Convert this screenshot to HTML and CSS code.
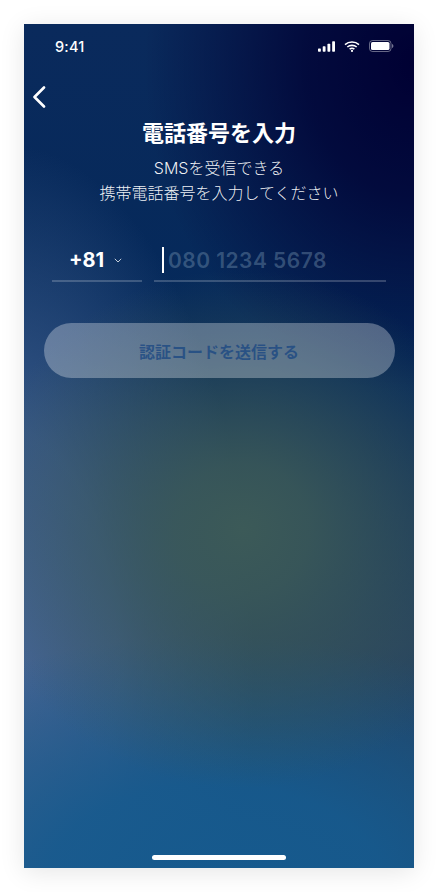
FILE: index.html
```html
<!DOCTYPE html>
<html lang="ja">
<head>
<meta charset="utf-8">
<title>電話番号を入力</title>
<link rel="stylesheet" href="styles.css">
</head>
<body>
<main class="screen">
  <div class="status">
    <span class="time">9:41</span>
    <div class="status-icons">
      <svg class="sig" width="17" height="11" viewBox="0 0 18 11"><rect x="0" y="7.500" width="3" height="3.500" rx=".7"/><rect x="5" y="5.200" width="3" height="5.800" rx=".7"/><rect x="10" y="2.600" width="3" height="8.400" rx=".7"/><rect x="15" y="0" width="3" height="11" rx=".7"/></svg>
      <svg class="wifi" width="16" height="11" viewBox="0 0 16 11"><path d="M1 3.600C4.900.2 11.100.2 15 3.600M3.300 6C5.900 3.800 10.100 3.800 12.700 6M5.600 8.200C7 7.100 9 7.100 10.400 8.200" fill="none" stroke="#fff" stroke-width="1.600"/><circle cx="8" cy="9.900" r="1.100" fill="#fff"/></svg>
      <svg class="batt" width="25" height="12" viewBox="0 0 25 12"><rect x=".5" y=".5" width="21.500" height="11" rx="3" fill="none" stroke="#fff" stroke-opacity=".4"/><rect x="2" y="2" width="18.500" height="8" rx="1.600" fill="#fff"/><path d="M23 4v4c.8-.3 1.400-1.100 1.400-2s-.6-1.700-1.400-2z" fill="#fff" fill-opacity=".45"/></svg>
    </div>
  </div>
  <button class="back" aria-label="戻る">
    <svg width="14" height="22" viewBox="0 0 14 22"><path d="M12 1.500 2.500 11 12 20.500" fill="none" stroke="#fff" stroke-width="2.600" stroke-linecap="round" stroke-linejoin="round"/></svg>
  </button>
  <h1 class="title">電話番号を入力</h1>
  <p class="lead">SMSを受信できる<br>携帯電話番号を入力してください</p>
  <div class="phone-row">
    <div class="code">
      <span class="code-num">+81</span>
      <svg class="chev" width="8" height="5" viewBox="0 0 8 5"><path d="M.8.8 4 4 7.200.8" fill="none" stroke="#fff" stroke-opacity=".85" stroke-width=".9"/></svg>
    </div>
    <div class="number">
      <span class="caret"></span>
      <span class="placeholder">080 1234 5678</span>
    </div>
  </div>
  <button class="submit">認証コードを送信する</button>
  <div class="home-bar"></div>
</main>
</body>
</html>
```
FILE: styles.css
```css
* { box-sizing: border-box; }
html, body { margin: 0; height: 100%; }
body {
  background: #fff;
  padding: 24px 25px 24px 24px;
  font-family: Inter, "Noto Sans CJK JP", sans-serif;
  overflow: hidden;
}
.screen {
  width: 390px;
  height: 844px;
  display: flex;
  flex-direction: column;
  color: #fff;
  box-shadow: 0 4px 24px rgba(0, 0, 0, .1);
  background:
    radial-gradient(ellipse 270px 260px at 218px 505px, rgba(60, 90, 88, 1) 0%, rgba(60, 90, 88, .85) 25%, rgba(60, 90, 88, .45) 60%, rgba(60, 90, 88, 0) 100%),
    radial-gradient(ellipse 420px 250px at 190px 860px, #165a8e 0%, rgba(22, 90, 142, .9) 40%, rgba(22, 90, 142, 0) 100%),
    radial-gradient(ellipse 250px 520px at -20px 640px, #456594 0%, rgba(69, 101, 148, .75) 45%, rgba(69, 101, 148, 0) 100%),
    radial-gradient(ellipse 270px 330px at 390px 40px, #000033 0%, rgba(0, 0, 51, .75) 40%, rgba(0, 0, 51, 0) 100%),
    linear-gradient(to bottom, #0a2a5c 0, #04295a 340px, #26425f 620px, #1d4a74 844px);
}
.status {
  display: flex;
  justify-content: space-between;
  align-items: center;
  height: 44px;
  padding: 0 20px 0 31px;
}
.time { font-size: 14.500px; font-weight: 500; letter-spacing: .2px; }
.status-icons { display: flex; align-items: center; gap: 9px; }
.sig { fill: #fff; }
.back {
  align-self: flex-start;
  margin: 18px 0 0 8px;
  padding: 0;
  height: 22px;
  border: 0;
  background: none;
  display: block;
}
.title {
  margin: 10px 0 0;
  font-size: 22px;
  line-height: 30px;
  font-weight: 700;
  text-align: center;
}
.lead {
  margin: 8px 0 0;
  font-size: 16px;
  line-height: 25px;
  font-weight: 300;
  text-align: center;
  color: rgba(255, 255, 255, .95);
}
.phone-row {
  display: flex;
  gap: 12px;
  margin: 34px 28px 0;
}
.code {
  width: 90px;
  height: 42px;
  padding-right: 3px;
  display: flex;
  align-items: center;
  justify-content: center;
  gap: 10px;
  border-bottom: 2px solid rgba(255, 255, 255, .2);
}
.code-num { font-size: 20px; font-weight: 700; }
.number {
  flex: 1;
  height: 42px;
  display: flex;
  align-items: center;
  gap: 4px;
  padding-left: 8px;
  border-bottom: 2px solid rgba(255, 255, 255, .2);
}
.caret { width: 2px; height: 26px; background: #fff; }
.placeholder { font-size: 21px; font-weight: 600; color: rgba(110, 140, 170, .45); letter-spacing: .45px; }
.submit {
  margin: 41px 19.500px 0;
  height: 55px;
  border: 0;
  border-radius: 28px;
  background: rgba(255, 255, 255, .3);
  color: rgba(24, 70, 130, .75);
  font: 700 16px Inter, "Noto Sans CJK JP", sans-serif;
}
.home-bar {
  width: 134px;
  height: 5px;
  margin: auto auto 8px;
  border-radius: 3px;
  background: #fff;
}
```
